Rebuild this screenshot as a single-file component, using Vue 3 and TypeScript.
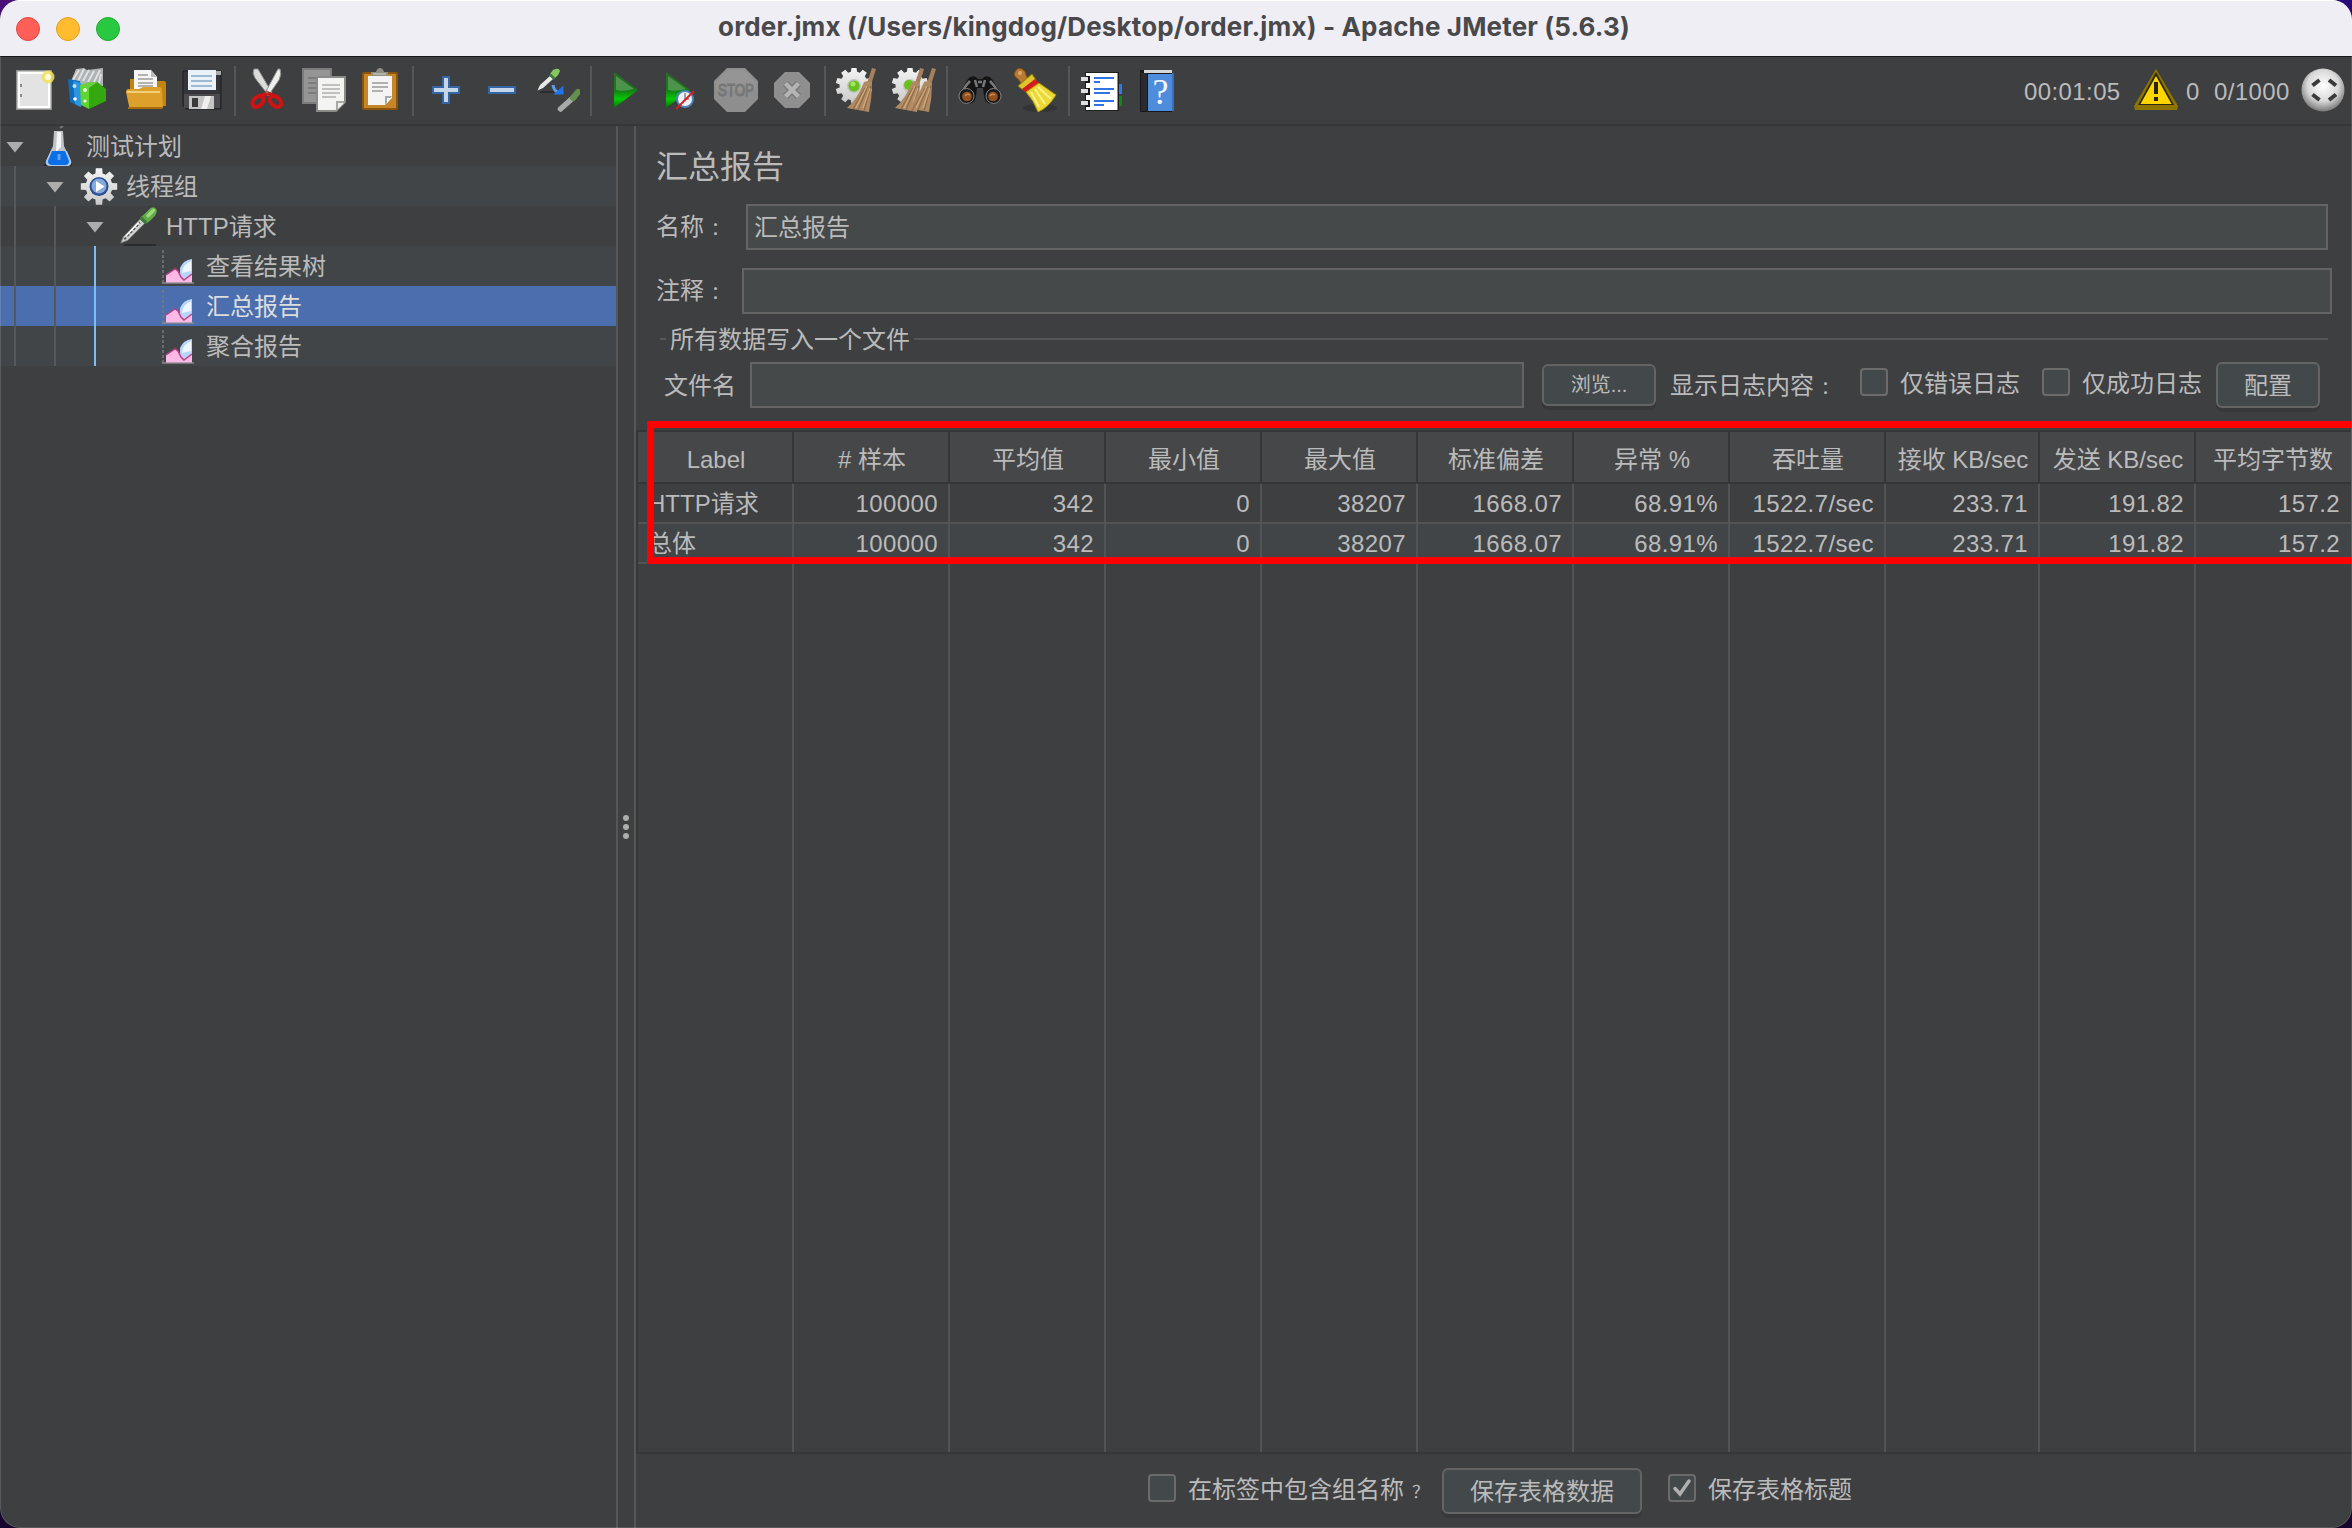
<script setup lang="ts">
interface TreeNode {
  label: string
  icon: string
  depth: number
  open?: boolean
  selected?: boolean
}

function gear(cx: number, cy: number, inner: number, outer: number, teeth: number): string {
  const step = (Math.PI * 2) / teeth
  const points: string[] = []
  for (let i = 0; i < teeth; i++) {
    const a = i * step - Math.PI / 2
    const corners: [number, number][] = [
      [-0.34, inner], [-0.22, outer], [0.22, outer], [0.34, inner],
    ]
    for (const [offset, r] of corners) {
      const t = a + offset * step
      points.push(`${(cx + r * Math.cos(t)).toFixed(1)},${(cy + r * Math.sin(t)).toFixed(1)}`)
    }
  }
  return points.join(' ')
}

const sweep = (dx: number): string => `
  <path d="M${36 + dx} 0 L${40 + dx} 1 L${35 + dx} 17 L${31 + dx} 15Z" fill="#a5805a"/>
  <path d="M${28 + dx} 14 Q${32 + dx} 12 ${36 + dx} 15 Q${36 + dx} 30 ${33 + dx} 44 L${11 + dx} 40 Q${22 + dx} 30 ${28 + dx} 14Z" fill="#b08a63"/>
  <path d="M${29 + dx} 20 L${17 + dx} 41 M${32 + dx} 18 L${22 + dx} 42 M${35 + dx} 18 L${28 + dx} 43" stroke="#8f6b47" stroke-width="1.2"/>
  <path d="M${31 + dx} 18 L${20 + dx} 40 M${34 + dx} 20 L${27 + dx} 40" stroke="#cfab80" stroke-width="1.2"/>`

const dropper = `
  <path d="M2 42 L5 35 L24 15 L29 20 L10 39Z" fill="#cfd2ce" stroke="#7b7f7b" stroke-width="1"/>
  <path d="M6 38 L24 19" stroke="#555" stroke-width="2" stroke-dasharray="3 2"/>
  <path d="M8 34 L22 19" stroke="#fff" stroke-width="1.5"/>
  <path d="M24 13 L31 20 L35 17 L41 11 Q45 5 41 2 Q37 0 33 5 L28 10Z" fill="#63ab49"/>
  <path d="M24.500 13 L31 19.500" stroke="#3c7a38" stroke-width="3.500"/>
  <path d="M33 11 L39 5" stroke="#9cd878" stroke-width="4" stroke-linecap="round"/>`

const icons: Record<string, string> = {
  create: `<rect x="4" y="2" width="36" height="40" fill="#8d8f8a"/><rect x="5.500" y="3.500" width="33" height="37" fill="#fff"/>
    <rect x="8" y="6" width="28" height="32" fill="#e3e3e3"/><path d="M8 16h2v3h-2zM8 26h2v3h-2z" fill="#8a8a8a"/>
    <circle cx="36" cy="9" r="6.500" fill="#f2e25c" opacity=".85"/><circle cx="36" cy="9" r="3" fill="#fffde0"/>`,
  templates: `<path d="M3 13 L8 1 L16 0 L19 2 L35 0 L35 18 L12 20Z" fill="#aeb2b4"/><path d="M5 12l6-10M10 13l6-12M15 13l6-11M20 14l6-11M26 14l6-12M31 15l2-9" stroke="#dfe1e2" stroke-width="2"/>
    <path d="M0 11 L12 13 L12 39 L2 34Z" fill="#0f6dba"/><path d="M5 13l8 2v24l-6-3z" fill="#2c95e0"/><circle cx="6.500" cy="18" r="2" fill="#bfe2fb"/><circle cx="7" cy="31" r="1.800" fill="#fff"/>
    <path d="M12 17 L21 19 L21 41 L13 37Z" fill="#5fd62f"/><path d="M21 19 L29 14 L38 21 L38 33 L21 41Z" fill="#33a80f"/><path d="M12 17 L21 14 L29 14 L21 20Z" fill="#6ccf42"/>
    <circle cx="17" cy="22" r="2" fill="#e8ffe0"/><circle cx="17" cy="33" r="1.600" fill="#fff"/>`,
  open: `<path d="M6 11h12v8h12l2-6h8q2 0 2 3v22h-36z" fill="#c2830f"/><path d="M10 2h17l6 7v15h-23z" fill="#f6f6f6"/><path d="M27 2v7h6z" fill="#bdbdbd"/>
    <path d="M14 7h10M14 11h15M14 15h15M14 18h15" stroke="#9c9c9c" stroke-width="1.500"/>
    <path d="M2 24q0-3 3-3h10l4-2h16q3 0 3 3l1 16q0 3-3 3h-28q-3 0-3-3z" fill="#dca02b"/><path d="M3 24h33" stroke="#f2cf7a" stroke-width="2"/><path d="M4 40h34" stroke="#a86c08" stroke-width="2"/>`,
  save: `<path d="M3 3h38v38h-35l-3-3z" fill="#34353a" stroke="#1e1e20" stroke-width="1"/><path d="M4 26h36v14h-36z" fill="#4b4b4f"/><rect x="8" y="2" width="28" height="20" fill="#eaf1f8"/>
    <path d="M11 8h21M11 13h21M11 18h21" stroke="#9dbad4" stroke-width="2"/><rect x="9" y="28" width="25" height="13" fill="#c4c4c4"/><rect x="12" y="30" width="6" height="9" fill="#3a3a3a"/><path d="M25 28h6l-4 13h-6z" fill="#eee"/>
    <rect x="36" y="3" width="5" height="4" fill="#aaa"/>`,
  cut: `<path d="M8 1 Q6 5 9 10 L23 28 L26 25 L12 1Z" fill="#dcdcda" stroke="#8f8f8d" stroke-width="1"/><path d="M32 1 L19 25 L22 28 L33 12 Q36 6 34 1Z" fill="#efefed" stroke="#8f8f8d" stroke-width="1"/>
    <g fill="none" stroke="#cf1212" stroke-width="4"><ellipse cx="12" cy="33.500" rx="6.500" ry="4.500" transform="rotate(-42 12 33.500)"/><ellipse cx="29.500" cy="33.500" rx="6.500" ry="4.500" transform="rotate(42 29.500 33.500)"/><path d="M15 28l6-3 7 3"/></g><circle cx="21" cy="24" r="1.500" fill="#777"/>`,
  copy: `<rect x="1" y="1" width="28" height="34" fill="#949594" stroke="#7b7c7b" stroke-width="2"/><path d="M6 10h10M6 15h8M6 20h8M6 25h8" stroke="#7a7b7a" stroke-width="2"/>
    <path d="M15 9h28v25l-9 9h-19z" fill="#f3f3f2" stroke="#8a8b86" stroke-width="2"/><path d="M20 17h18M20 21h18M20 25h18M20 29h14" stroke="#b0b0b0" stroke-width="1.600"/><path d="M43 33h-9v10z" fill="#a8a9a5"/><path d="M36 35h6l-6 6z" fill="#eee"/>`,
  paste: `<rect x="4" y="4" width="36" height="38" rx="2" fill="#8a5509"/><rect x="6" y="6" width="32" height="34" fill="#c5862a"/><path d="M10 8h24v22l-7 7h-17z" fill="#f4f4f4"/>
    <path d="M14 15h16M14 19h16M14 23h11" stroke="#999" stroke-width="1.600"/><path d="M34 28h-7v9z" fill="#a9a9a9"/><path d="M29 30h4l-4 5z" fill="#fff"/><path d="M13 8v-4h5q1-4 4-4t4 4h4v4z" fill="#8f9083"/><path d="M15 6h13" stroke="#b3b4a8" stroke-width="2"/>`,
  plus: `<path d="M19 9h6v10h10v6h-10v10h-6v-10h-10v-6h10z" fill="#c6d5ea" stroke="#3465a4" stroke-width="2"/>`,
  minus: `<rect x="9" y="19" width="26" height="6" fill="#c6d5ea" stroke="#3465a4" stroke-width="2"/>`,
  toggle: `<path d="M4 24h14" stroke="#2a2b2c" stroke-width="2"/><path d="M1.500 22.500 L4 17 L14 8 L17 11 L7 20Z" fill="#e9eae8"/><path d="M14 6 L17 2 Q23 -1 24 3 Q23 7 19 10 L18 11Z" fill="#85c75c"/><path d="M14 6.500l4.500 4.500" stroke="#3c7a38" stroke-width="2.500"/>
    <path d="M17 17q1 6 5 7" fill="none" stroke="#5c9bea" stroke-width="3"/><path d="M27.500 17.500v9h-10z" fill="#1e74e8"/>
    <g opacity=".8"><path d="M24.500 41 L38 29" stroke="#c3c4c3" stroke-width="5.500" stroke-linecap="round"/><path d="M37 30 L42 24" stroke="#6fa350" stroke-width="6" stroke-linecap="round"/></g>`,
  start: `<path d="M12 4 L36 22 L12 40Z" fill="url(#play)"/><path d="M14 8 L32 21 Q22 24 14 22Z" fill="#fff" opacity=".22"/>`,
  startNow: `<path d="M8 4 L32 22 L8 40Z" fill="url(#play)"/><path d="M10 8 L28 21 Q18 24 10 22Z" fill="#fff" opacity=".22"/><circle cx="27" cy="31" r="8" fill="#eef2f6" stroke="#4d86be" stroke-width="2"/><path d="M27 25v6h4" stroke="#888" stroke-width="1.500" fill="none"/><path d="M18 41L36 23" stroke="#dd1c1c" stroke-width="2"/>`,
  stop: `<path d="M13 0h18l13 13v18l-13 13h-18l-13-13v-18z" fill="#8e8e8e"/><path d="M14 2h16l12 12v8h-40v-8z" fill="#959595"/><text x="4" y="28" textLength="36" lengthAdjust="spacingAndGlyphs" font-family="Liberation Sans" font-size="17" fill="#8e8e8e" stroke="#757575" stroke-width="1.200">STOP</text>`,
  shutdown: `<path d="M15 4h14l11 11v14l-11 11h-14l-11-11v-14z" fill="#8f8f8f"/><path d="M15.500 15.500l13 13M28.500 15.500l-13 13" stroke="#777" stroke-width="7"/><path d="M15.500 15.500l13 13M28.500 15.500l-13 13" stroke="#b4b4b4" stroke-width="4.500"/>`,
  clear: `<polygon points="${gear(18, 18, 14.5, 18.5, 10)}" fill="url(#metal)"/><circle cx="18" cy="18" r="7" fill="#bfc5bb"/><circle cx="18" cy="18" r="5.500" fill="#68c01c"/><circle cx="17" cy="16" r="2.500" fill="#a5e364"/>${sweep(0)}`,
  clearAll: `<polygon points="${gear(18, 18, 14.5, 18.5, 10)}" fill="url(#metal)"/><circle cx="18" cy="18" r="7" fill="#bfc5bb"/><circle cx="17" cy="17" r="5" fill="#68c01c"/>${sweep(-8)}${sweep(4)}`,
  search: `<path d="M10 11q3-4 8-2l2 2h4l2-2q5-2 8 2l9 15q1 9-8 10q-8 0-9-8l-1-8h-6l-1 8q-1 8-9 8q-9-1-8-10z" fill="#141414"/><path d="M12 13q-5 5-8 11M17 12l2 7M32 13q5 5 8 11M27 12l-2 7M20 14h4" stroke="#77797b" stroke-width="2.500" fill="none"/>
    <circle cx="8.500" cy="28" r="7.500" fill="#1b1b1b" stroke="#858585" stroke-width="1"/><circle cx="35.500" cy="28" r="7.500" fill="#1b1b1b" stroke="#858585" stroke-width="1"/><circle cx="9" cy="28.500" r="4.800" fill="#96501d"/><circle cx="35" cy="28.500" r="4.800" fill="#96501d"/><path d="M7 28q2-3 5-1M32 28q2-3 5-1" stroke="#c98d5c" stroke-width="1.500" fill="none"/>`,
  broom: `<ellipse cx="26" cy="40" rx="17" ry="4" fill="#333435"/><path d="M1 4q2-5 7-3q4 2 4 6l4 9-6 3-6-8q-5-3-3-7z" fill="#b87a30" stroke="#865015" stroke-width="1"/><circle cx="6" cy="5" r="2" fill="#dca867"/>
    <path d="M4 18L18 6l4 6-13 10z" fill="#dcc52b" stroke="#8e7a08" stroke-width="1"/><path d="M8 21l13-10 4 4-13 10z" fill="#d51c1c"/><path d="M12 24l13-9q7 5 17 12-8 13-18 17-4-11-12-20z" fill="#ead835" stroke="#a99308" stroke-width="1"/><path d="M17 24l8 15M21 21l10 15M24 19l13 12" stroke="#fff18a" stroke-width="2"/>`,
  functions: `<path d="M36 16h6v10h-6z" fill="#2d7be8"/><path d="M36 28h6v10h-6z" fill="#118a11"/><rect x="5" y="4" width="34" height="39" fill="#1f1f20"/><rect x="6" y="5" width="31.500" height="37" fill="#fff"/>
    <path d="M14 10h20M14 21h20M14 25h16M14 33h20M14 37h10M14 14h6" stroke="#3173e2" stroke-width="2"/><g fill="#151515"><rect x="6" y="8" width="4" height="7"/><rect x="6" y="20" width="4" height="7"/><rect x="6" y="32" width="4" height="7"/></g><path d="M1 11h7M1 23h7M1 35h7" stroke="#dfdfdf" stroke-width="4"/>`,
  help: `<path d="M4 2h32v42h-32z" fill="#16181b"/><path d="M8 2h28v3h-28z" fill="#d5d8db"/><path d="M12 6h25v37h-25z" fill="#4d8ddc"/><path d="M5 5h6v38h-6z" fill="#292b2e"/><path d="M37 5v38" stroke="#3671bd" stroke-width="2"/><text x="24.500" y="36" text-anchor="middle" font-family="Liberation Serif" font-size="36" fill="#f2f6fc">?</text>`,
  warning: `<path d="M22 1 L44 38 L43 42 H1 L0 38Z" fill="#8d7500"/><path d="M22 4 L40 37 H4Z" fill="#2c2a14"/><path d="M22 8 L37.500 36 H6.500Z" fill="#ffd500"/><path d="M20 14h4v12h-4zM20 29h4v4h-4z" fill="#26240f"/>`,
  remote: `<circle cx="22" cy="22" r="21.500" fill="url(#orb)"/><g stroke="#3a3b3c" stroke-width="4" fill="none"><path d="M11.500 17.500l7-5.500M28 12l7 5.500M11.500 26.500l7 5.500M28 32l7-5.500"/></g>`,
  plan: `<path d="M4 39h28" stroke="#27282a" stroke-width="2"/><path d="M20 2l3-2" stroke="#777" stroke-width="2"/><path d="M14 5h9l1 15 7 15q1 4-3 5h-19q-4-1-3-5l7-15z" fill="#c0c4c8"/><path d="M17 6h4v15l-5 5z" fill="#f5f5f5"/><path d="M11 25h16l4 10q1 4-3 5h-19q-4-1-3-5z" fill="#a9c6ee"/><path d="M12 25h13l4 10q0 4-4 4h-13q-4 0-4-4z" fill="#0c6fe6"/><path d="M19 28v6" stroke="#55a5f8" stroke-width="3"/>`,
  threads: `<polygon points="${gear(19, 20.5, 13.5, 18.5, 8)}" fill="url(#metal)"/><circle cx="19" cy="20.500" r="9.500" fill="#2c4f92"/><circle cx="19" cy="20" r="7.500" fill="#86a8da"/><path d="M16 15v11l8.500-5.500z" fill="#fff"/>`,
  sampler: `<path d="M4 39h32" stroke="#2a2b2c" stroke-width="2"/><g transform="translate(-1 0) scale(.88)">${dropper}</g>`,
  report: `<path d="M3 4v33" stroke="#77797b" stroke-width="1.500" stroke-dasharray="3 2"/><path d="M2 37h32" stroke="#8a8a8a" stroke-width="1.500"/><path d="M20 32V22q3-8 12-9v23h-8z" fill="#b7d5f8"/><path d="M22 27q1-9 9-12v10z" fill="#eef6ff"/><path d="M6 36.500V29l9-6 3 2 4 6 3 3 7-5v7.500z" fill="#fbb9e6"/><path d="M6 29l9-6 3 2 3 6 3 3 8-6" stroke="#bf3f86" stroke-width="1.500" fill="none"/>`,
}

const groups: string[][] = [
  ['create', 'templates', 'open', 'save'],
  ['cut', 'copy', 'paste'],
  ['plus', 'minus', 'toggle'],
  ['start', 'startNow', 'stop', 'shutdown'],
  ['clear', 'clearAll'],
  ['search', 'broom'],
  ['functions', 'help'],
]

const nodes: TreeNode[] = [
  { label: '测试计划', icon: 'plan', depth: 0, open: true },
  { label: '线程组', icon: 'threads', depth: 1, open: true },
  { label: 'HTTP请求', icon: 'sampler', depth: 2, open: true },
  { label: '查看结果树', icon: 'report', depth: 3 },
  { label: '汇总报告', icon: 'report', depth: 3, selected: true },
  { label: '聚合报告', icon: 'report', depth: 3 },
]

const columns: string[] = ['Label', '# 样本', '平均值', '最小值', '最大值', '标准偏差', '异常 %', '吞吐量', '接收 KB/sec', '发送 KB/sec', '平均字节数']
const metrics: string[] = ['100000', '342', '0', '38207', '1668.07', '68.91%', '1522.7/sec', '233.71', '191.82', '157.2']
const rows: string[][] = [['HTTP请求', ...metrics], ['总体', ...metrics]]
</script>

<template>
  <div class="desktop">
    <div class="window">
      <header class="titlebar">
        <div class="lights"><i class="red"></i><i class="yellow"></i><i class="green"></i></div>
        <h1>order.jmx (/Users/kingdog/Desktop/order.jmx) - Apache JMeter (5.6.3)</h1>
      </header>

      <svg class="defs" width="0" height="0">
        <defs>
          <linearGradient id="play" x1="0" y1="0" x2="0" y2="1"><stop offset="0" stop-color="#2a6b2a" /><stop offset=".5" stop-color="#157a15" /><stop offset=".75" stop-color="#06c806" /><stop offset="1" stop-color="#057005" /></linearGradient>
          <linearGradient id="metal" x1="0" y1="0" x2="0" y2="1"><stop offset="0" stop-color="#f4f4f4" /><stop offset="1" stop-color="#c9c9c9" /></linearGradient>
          <radialGradient id="orb" cx=".5" cy=".4" r=".6"><stop offset="0" stop-color="#fff" /><stop offset=".6" stop-color="#d9d9d9" /><stop offset="1" stop-color="#777" /></radialGradient>
        </defs>
      </svg>

      <nav class="toolbar">
        <div v-for="(group, g) in groups" :key="g" class="group">
          <svg v-for="name in group" :key="name" width="44" height="44" viewBox="0 0 44 44" v-html="icons[name]"></svg>
        </div>
        <div class="status">
          <span class="time">00:01:05</span>
          <svg width="44" height="44" viewBox="0 0 44 44" v-html="icons.warning"></svg>
          <span class="errors">0</span>
          <span class="threads">0/1000</span>
          <svg width="44" height="44" viewBox="0 0 44 44" v-html="icons.remote"></svg>
        </div>
      </nav>

      <main>
        <aside class="tree">
          <div v-for="(node, n) in nodes" :key="n" class="node" :class="{ selected: node.selected }">
            <span v-for="d in node.depth" :key="d" class="guide" :class="{ active: d === 3 }"></span>
            <span class="arrow"><svg v-if="node.open" width="18" height="11" viewBox="0 0 18 11"><path d="M0.500 0h17l-8.500 10.500z" fill="#adadad" /></svg></span>
            <svg width="40" height="40" viewBox="0 0 40 40" v-html="icons[node.icon]"></svg>
            <span class="label">{{ node.label }}</span>
          </div>
        </aside>
        <div class="splitter"><i></i><i></i><i></i></div>

        <section class="panel">
          <h2>汇总报告</h2>
          <div class="field name"><label>名称<span class="colon">：</span></label><div class="input">汇总报告</div></div>
          <div class="field comment"><label>注释<span class="colon">：</span></label><div class="input"></div></div>
          <div class="legend"><hr class="dash"><span>所有数据写入一个文件</span><hr class="rule"></div>
          <div class="file">
            <label>文件名</label>
            <div class="input"></div>
            <button class="browse">浏览...</button>
            <span class="show">显示日志内容<span class="colon">：</span></span>
            <i class="box"></i><span class="opt">仅错误日志</span>
            <i class="box second"></i><span class="opt">仅成功日志</span>
            <button class="config">配置</button>
          </div>

          <div class="table">
            <div class="row head"><span v-for="c in columns" :key="c">{{ c }}</span></div>
            <div v-for="(row, r) in rows" :key="r" class="row data"><span v-for="(cell, c) in row" :key="c">{{ cell }}</span></div>
            <div class="row empty"><span v-for="c in columns" :key="c"></span></div>
            <div class="highlight"></div>
          </div>

          <footer>
            <i class="box"></i><span class="group-name">在标签中包含组名称<span class="mark">？</span></span>
            <button class="save">保存表格数据</button>
            <i class="box"><svg width="24" height="24" viewBox="0 0 24 24"><path d="M5 12.500l5 5.500L19 5" fill="none" stroke="#b0b0b0" stroke-width="3.500" stroke-linecap="round" /></svg></i>
            <span>保存表格标题</span>
          </footer>
        </section>
      </main>
    </div>
  </div>
</template>

<style>
body { margin: 0; }
</style>

<style scoped>
* { box-sizing: border-box; }
.desktop {
  width: 2352px; height: 1528px; overflow: hidden;
  background: linear-gradient(90deg, #4b0f7a, #2a0a78) top / 100% 50% no-repeat, #16052e;
  font: 24px/32px "Liberation Sans", "Noto Sans CJK SC", sans-serif; color: #bbb;
}
.window {
  position: relative; width: 100%; height: 100%; overflow: hidden; border-radius: 20px;
  display: flex; flex-direction: column; background: #3e3f41; white-space: nowrap;
}
.window::after { content: ""; position: absolute; inset: 0; border: 1px solid rgba(255, 255, 255, .14); border-radius: 20px; }
.titlebar {
  flex: none; display: grid; grid-template-columns: 146px 1fr 150px; align-items: center;
  height: 57px; background: #f0eef5; border-bottom: 1px solid #161616; border-top: 1px solid #fff;
}
.lights { display: flex; gap: 16px; padding-left: 16px; }
.lights i { width: 24px; height: 24px; border-radius: 50%; border: 1px solid #e2463f; background: #ff5f57; }
.lights .yellow { border-color: #e0a023; background: #febc2e; }
.lights .green { border-color: #1dad2b; background: #28c840; }
h1 { margin: -3px 0 0; text-align: center; font: 700 26px/32px Inter, sans-serif; letter-spacing: .15px; color: #49484a; }
.defs { position: absolute; }
svg { display: block; flex: none; }
.toolbar { flex: none; display: flex; height: 69px; padding: 9px 7px 0 12px; border-bottom: 2px solid #343638; }
.group { display: flex; gap: 12px; height: 50px; padding-top: 2px; }
.group + .group { margin-left: 10px; padding-left: 10px; border-left: 2px solid #545658; }
.status { display: flex; margin-left: auto; padding-top: 2px; line-height: 47px; letter-spacing: .4px; }
.time { width: 110px; }
.errors { width: 36px; padding-left: 8px; }
.threads { width: 87px; }

main { flex: 1; display: flex; min-height: 0; }
.tree { width: 618px; border-right: 2px solid #55575a; }
.node { display: flex; height: 40px; align-items: center; }
.node:nth-child(even) { background: #414547; }
.node.selected { background: #4b6eaf; color: #ddd; }
.guide { width: 2px; height: 40px; margin: 0 24px 0 14px; background: #55575a; }
.guide.active { background: #7cbdf7; }
.arrow { width: 18px; margin: 0 16px 0 6px; padding-top: 2px; }
.label { padding: 2px 0 0 6px; }
.splitter { width: 18px; border-right: 2px solid #55575a; display: flex; flex-direction: column; align-items: center; justify-content: center; gap: 3px; }
.splitter i { width: 6px; height: 6px; border-radius: 50%; background: #adadad; }

.panel { flex: 1; min-width: 0; display: flex; flex-direction: column; }
h2 { margin: 17px 0 0 20px; font-size: 32px; line-height: 48px; font-weight: 400; height: 61px; }
.field { display: flex; height: 46px; padding-left: 20px; align-items: center; }
.field label { padding-top: 2px; }
.field .input { flex: 1; }
.name label { width: 90px; }
.name { padding-right: 24px; }
.comment { margin-top: 18px; padding-right: 20px; }
.comment label { width: 86px; }
.colon { padding-left: 7px; font-size: 18px; }
.input { height: 46px; border: 2px solid #646464; background: #45494a; padding-left: 6px; line-height: 43px; }
.legend { display: flex; align-items: center; height: 32px; margin: 9px 24px 0; }
.legend span { padding-top: 1px; }
hr { margin: 0; border: 0; height: 2px; background: #55575a; }
.dash { width: 6px; margin-right: 4px; }
.rule { flex: 1; margin-left: 4px; }
.file { display: flex; align-items: flex-start; height: 68px; margin-top: 7px; padding-left: 28px; }
.file label { width: 86px; line-height: 47px; }
.file .input { width: 774px; }
button { height: 46px; padding: 0; border: 2px solid #646464; border-radius: 6px; background: #43494b; box-shadow: 0 4px 0 #36383a; color: inherit; font: inherit; line-height: 41px; text-align: center; }
.browse { width: 114px; height: 42px; margin: 2px 14px 0 18px; font-size: 20px; line-height: 37px; }
.show { width: 190px; line-height: 48px; }
.box { flex: none; display: block; width: 28px; height: 28px; border: 2px solid #6b6b6b; border-radius: 4px; background: #43494b; margin-right: 12px; }
.file .box { margin-top: 6px; }
.opt { width: 142px; line-height: 44px; }
.opt + .box + .opt { width: 134px; }
.config { width: 104px; }

.table { position: relative; flex: none; height: 1024px; display: flex; flex-direction: column; border: 2px solid #343638; border-right: 0; }
.row { display: grid; grid-template-columns: repeat(8, 156px) 154px 156px 156px; }
.row > span { border-right: 2px solid #515355; }
.head { height: 52px; background: #464749; border-bottom: 2px solid #343638; }
.head > span { border-color: #343638; text-align: center; line-height: 55px; padding-left: 2px; }
.head > span:last-child { padding-left: 0; }
.data { height: 40px; border-bottom: 2px solid #515355; text-align: right; line-height: 40px; }
.data > span { padding-right: 10px; letter-spacing: .4px; }
.data > span:first-child { padding-left: 10px; text-align: left; letter-spacing: 0; }
.data + .data { background: #414547; }
.empty { flex: 1; }
.row > span:last-child { border-right-color: transparent; }
.highlight { position: absolute; left: 9px; top: -11px; width: 1711px; height: 143px; border: 7px solid #ff0000; }

footer { display: flex; padding: 14px 0 0 512px; }
footer .box { margin-top: 6px; }
footer span { line-height: 43px; }
.group-name { width: 254px; }
.mark { font-size: 17px; padding-left: 8px; }
.save { width: 200px; margin-right: 26px; }
</style>
